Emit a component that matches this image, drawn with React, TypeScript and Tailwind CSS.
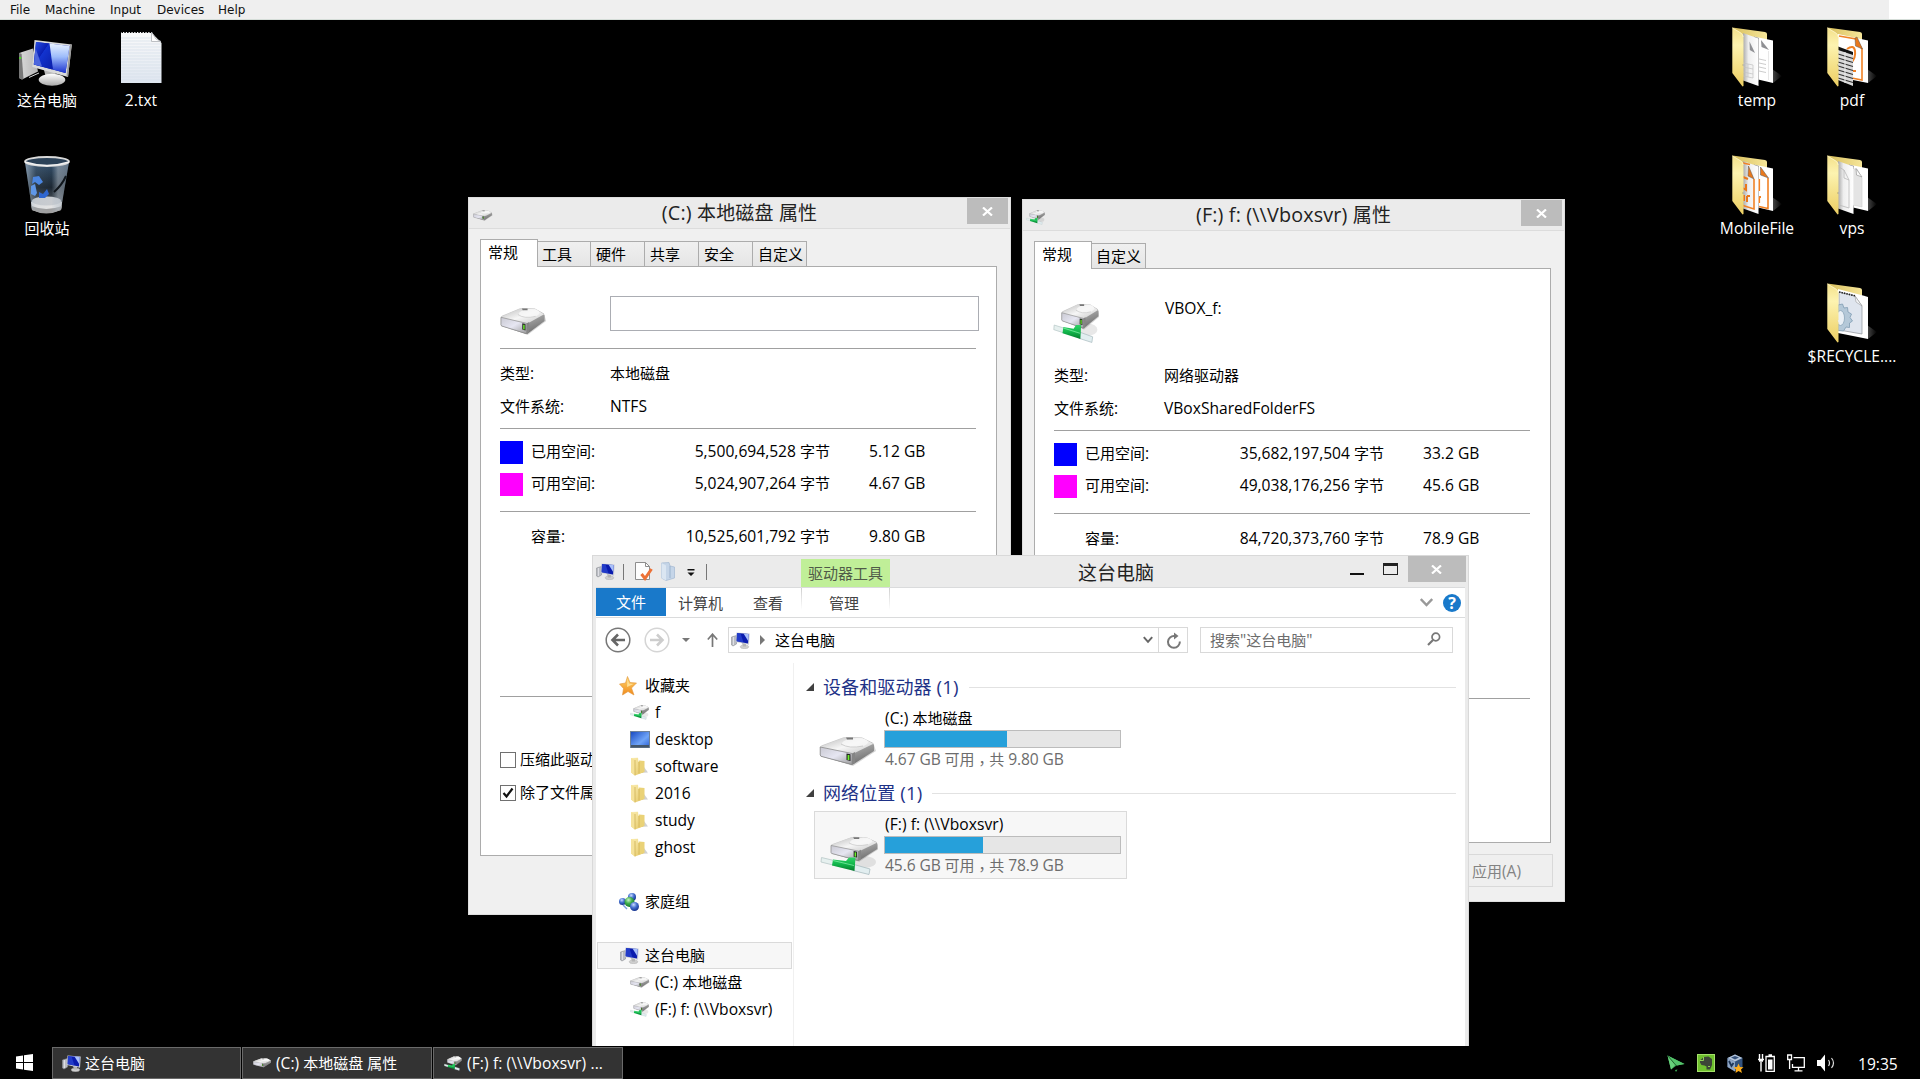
import type { ReactNode } from 'react';

function Defs() {
  return (
    <svg width="0" height="0" className="absolute">
      <defs>
        <linearGradient id="screen" x1="0" y1="0" x2="1" y2="1">
          <stop offset="0" stopColor="#2a52e8" />
          <stop offset="0.42" stopColor="#0a1fb4" />
          <stop offset="0.44" stopColor="#1233cf" />
          <stop offset="1" stopColor="#0b1fa8" />
        </linearGradient>
        <linearGradient id="shine" x1="0" y1="0" x2="0" y2="1">
          <stop offset="0" stopColor="#e8f1ff" />
          <stop offset="0.45" stopColor="#9dbcfb" />
          <stop offset="1" stopColor="#1b32cf" />
        </linearGradient>
        <linearGradient id="tower" x1="0" y1="0" x2="1" y2="0">
          <stop offset="0" stopColor="#8d8d8d" />
          <stop offset="0.15" stopColor="#d5d5d5" />
          <stop offset="1" stopColor="#b5b5b5" />
        </linearGradient>
        <linearGradient id="metal" x1="0" y1="0" x2="0" y2="1">
          <stop offset="0" stopColor="#ffffff" />
          <stop offset="1" stopColor="#a9a9a9" />
        </linearGradient>
        <linearGradient id="driveTop" x1="0" y1="0" x2="1" y2="1">
          <stop offset="0" stopColor="#b9b9b9" />
          <stop offset="0.5" stopColor="#f6f6f6" />
          <stop offset="1" stopColor="#c4c4c4" />
        </linearGradient>
        <linearGradient id="driveFront" x1="0" y1="0" x2="1" y2="1">
          <stop offset="0" stopColor="#c9c9d2" />
          <stop offset="0.5" stopColor="#e6e6f2" />
          <stop offset="1" stopColor="#9b9b9b" />
        </linearGradient>
        <linearGradient id="driveSide" x1="0" y1="0" x2="0.6" y2="1">
          <stop offset="0" stopColor="#e3e3e3" />
          <stop offset="0.6" stopColor="#a2a2a2" />
          <stop offset="1" stopColor="#737373" />
        </linearGradient>
        <linearGradient id="green" x1="0" y1="0" x2="0" y2="1">
          <stop offset="0" stopColor="#2fd266" />
          <stop offset="0.5" stopColor="#11b54b" />
          <stop offset="1" stopColor="#067c2d" />
        </linearGradient>
        <linearGradient id="folderFront" x1="0" y1="0" x2="0" y2="1">
          <stop offset="0" stopColor="#f3e08a" />
          <stop offset="0.3" stopColor="#fdf3b0" />
          <stop offset="1" stopColor="#ecce62" />
        </linearGradient>
        <linearGradient id="folderBack" x1="0" y1="0" x2="1" y2="0">
          <stop offset="0" stopColor="#d8bf5c" />
          <stop offset="1" stopColor="#f6e69a" />
        </linearGradient>
        <linearGradient id="fold" x1="0" y1="0" x2="1" y2="0">
          <stop offset="0" stopColor="#a8a8a8" />
          <stop offset="0.35" stopColor="#eeeeee" />
          <stop offset="1" stopColor="#ffffff" />
        </linearGradient>
        <linearGradient id="shade" x1="0" y1="0" x2="1" y2="0">
          <stop offset="0" stopColor="#4a4a4a" />
          <stop offset="1" stopColor="#000000" />
        </linearGradient>
        <linearGradient id="note" x1="0" y1="0" x2="0" y2="1">
          <stop offset="0" stopColor="#fafafa" />
          <stop offset="1" stopColor="#dfe6f0" />
        </linearGradient>
        <linearGradient id="bin" x1="0" y1="0" x2="0" y2="1">
          <stop offset="0" stopColor="#35516d" />
          <stop offset="0.5" stopColor="#1c2732" />
          <stop offset="1" stopColor="#6f7479" />
        </linearGradient>
        <linearGradient id="binSide" x1="0" y1="0" x2="1" y2="0">
          <stop offset="0" stopColor="#9fb2c4" stopOpacity="0.75" />
          <stop offset="0.25" stopColor="#9fb2c4" stopOpacity="0.1" />
          <stop offset="0.6" stopColor="#9fb2c4" stopOpacity="0" />
          <stop offset="0.75" stopColor="#b8c2cc" stopOpacity="0.5" />
          <stop offset="1" stopColor="#8c98a4" stopOpacity="0.55" />
        </linearGradient>
        <linearGradient id="star" x1="0" y1="0" x2="0" y2="1">
          <stop offset="0" stopColor="#ffd66b" />
          <stop offset="1" stopColor="#f08a1c" />
        </linearGradient>
        <linearGradient id="desk" x1="0" y1="0" x2="1" y2="1">
          <stop offset="0" stopColor="#1546c0" />
          <stop offset="0.6" stopColor="#6fa4f7" />
          <stop offset="1" stopColor="#2a5fd4" />
        </linearGradient>
        <linearGradient id="smallFolder" x1="0" y1="0" x2="1" y2="1">
          <stop offset="0" stopColor="#fbeeb4" />
          <stop offset="1" stopColor="#e4c662" />
        </linearGradient>
        <radialGradient id="ballBlue" cx="0.4" cy="0.3" r="0.7">
          <stop offset="0" stopColor="#c9dcff" />
          <stop offset="0.5" stopColor="#4470cf" />
          <stop offset="1" stopColor="#16338f" />
        </radialGradient>
        <radialGradient id="ballGreen" cx="0.4" cy="0.3" r="0.7">
          <stop offset="0" stopColor="#c8f5c4" />
          <stop offset="0.5" stopColor="#3fae4c" />
          <stop offset="1" stopColor="#137a2b" />
        </radialGradient>
      </defs>
    </svg>
  );
}

function PcIcon({ className }: { className: string }) {
  return (
    <svg viewBox="0 0 54 46" className={className} preserveAspectRatio="none">
      <path d="M1 13 15 8.5 20 31.5 4 39.5 1 38Z" fill="url(#tower)" />
      <path d="M1 13 3.6 14 5.5 38.8 4 39.5 1 38Z" fill="#777" />
      <rect x="1.2" y="17" width="2" height="2" fill="#4fd32c" />
      <path d="M11 37.500 21 33" stroke="#ddd" strokeWidth="1" />
      <path d="M26 30H38L37 38H28Z" fill="#b9b9b9" />
      <ellipse cx="34" cy="39.800" rx="13.300" ry="6" fill="url(#metal)" />
      <path d="M16.500 0 53.800 4.600 50 37 14.300 27Z" fill="#d9dadb" />
      <path d="M53.800 4.600 50 37 48.500 36.500 52 4.500Z" fill="#9a9a9a" />
      <path d="M18 2 51.500 6 47.500 33 15.800 24.500Z" fill="#0a1cb0" />
      <path d="M18 2 31.500 3.600 34.500 29.500 15.800 24.500Z" fill="url(#screen)" />
      <path d="M31.500 3.600 51.500 6 47.500 33 35 29.600Z" fill="url(#shine)" />
      <path d="M17.500 8 24 26.500 15.800 24.500Z" fill="#4c66dd" />
    </svg>
  );
}

/* At small sizes the tower stands out more and the screen is almost solid blue. */
function PcSmall() {
  return (
    <svg viewBox="0 0 19 17" className="h-[17px] w-[19px]">
      <path d="M0.500 5 5.500 3.500V12L2 14 0.500 13Z" fill="#b9bcc2" stroke="#8d9096" strokeWidth="0.600" />
      <path d="M2.500 5V13" stroke="#e9e9ee" strokeWidth="0.800" />
      <ellipse cx="13.500" cy="14.800" rx="4.300" ry="1.900" fill="#cfcfcf" stroke="#a5a5a5" strokeWidth="0.400" />
      <path d="M11 11H15V14.500H12Z" fill="#b5b5b5" />
      <path d="M5.500 0.400 18.700 1.500 18 12.800 4.800 10Z" fill="#cdd0d8" />
      <path d="M6 1 17.700 2 17 11.500 5.600 9.200Z" fill="#0b1cae" />
      <path d="M6 1 9.500 1.300 12.500 10.600 5.600 9.200Z" fill="#3250d8" opacity="0.600" />
      <path d="M12.500 1.500 17.700 2 17.200 9Z" fill="#a9c0fa" />
    </svg>
  );
}

function DriveShapes() {
  return (
    <g>
      <path d="M3 20 34 30 57 15 55 9Z" fill="#000" opacity="0.16" />
      <path d="M1 11.500Q1 10 3 9.200L24 1.600Q26 1 28 1L43 1.600 54 7 55 9V15L34 28.500 32.500 28.800 2 20.500 1 19Z" fill="url(#driveSide)" />
      <path d="M1.500 10.500 25 1.500 43 1.800 54.500 7.800 33.500 18 2 12Z" fill="url(#driveTop)" />
      <ellipse cx="36" cy="6.800" rx="13" ry="4.600" fill="#f8f8f8" opacity="0.8" transform="rotate(-4 36 6.800)" />
      <path d="M22 8Q30 13 44 10" stroke="#bdbdbd" fill="none" strokeWidth="0.700" />
      <path d="M27 1.500H34V3.500H28Z" fill="#777" />
      <path d="M1.200 11 33 17.500V28.500L2 20.300 1.200 19Z" fill="url(#driveFront)" stroke="#8c8c8c" strokeWidth="0.800" />
      <path d="M33 17.500 36 16V27L33 28.600Z" fill="#858585" />
      <path d="M27.500 17.500 31.500 18.200V25L27.500 24Z" fill="#222" />
      <rect x="28.600" y="19" width="1.800" height="5" fill="#6cf02a" />
    </g>
  );
}

function DriveIcon({ className }: { className: string }) {
  return (
    <svg viewBox="0 0 58 31" className={className} preserveAspectRatio="none">
      <DriveShapes />
    </svg>
  );
}

function NetDriveIcon({ className }: { className: string }) {
  return (
    <svg viewBox="0 0 58 40" className={className} preserveAspectRatio="none">
      <ellipse cx="44" cy="26" rx="12" ry="6" fill="#000" opacity="0.09" />
      <path d="M1.500 21.500 14 24.500 13 29 1 26Z" fill="#e6f0ef" stroke="#b7c8c8" strokeWidth="0.800" />
      <path d="M34 28.500 50 33 49 38.500 33 34.500Z" fill="#e2eef0" stroke="#a9bcc0" strokeWidth="0.800" />
      <g transform="translate(10 0) scale(0.86)">
        <DriveShapes />
      </g>
      <path d="M13 23.500 26 25 29 21.500H35.500L35 28 34.500 35 12 29.500Z" fill="url(#green)" />
      <path d="M13 24.500 34 29.500" stroke="#8bf3ae" strokeWidth="1" opacity="0.700" />
    </svg>
  );
}

function FolderSmall() {
  return (
    <svg viewBox="0 0 19 19" className="h-[19px] w-[19px]">
      <path d="M9 16 18 15.500 14 10Z" fill="#000" opacity="0.18" />
      <path d="M1 1 8 0.800 8.500 5 13 4.500V15.500L5 18.500 1 15.500Z" fill="url(#smallFolder)" />
      <path d="M1 1 5 2.800V18.500L1 15.500Z" fill="#f5e29a" />
      <path d="M8.500 5 9 3.500 14.500 4V15L9.500 16.500Z" fill="#ead277" />
      <path d="M5 3V18.300" stroke="#c9a94a" strokeWidth="0.700" />
      <path d="M9 5V16.500" stroke="#c9a94a" strokeWidth="0.600" />
    </svg>
  );
}

type FolderKind = 'lined' | 'pdf' | 'mobile' | 'blank' | 'gear';

function BigFolder({ kind }: { kind: FolderKind }) {
  return (
    <svg viewBox="0 0 50 60" className="mt-[4px] h-[60px] w-[50px]">
      <path d="M40 42 50 49 41 56Z" fill="url(#shade)" />
      <path d="M0.300 0.500 33 5Q35 5.300 35 7V20L10 12Z" fill="url(#folderBack)" />
      {kind === 'pdf' && (
        <g>
          <path d="M11 7 41 13.500V56L11 50Z" fill="#fff" />
          <path d="M12 9 29 12 35 22V53L12 48.500" fill="none" stroke="#f08226" strokeWidth="1.600" />
          <path d="M20 22Q27 17 28 24T24 36M25 44H29" fill="none" stroke="#f08226" strokeWidth="2" />
          <path d="M28 11 30 10 35.500 22 28.500 19Z" fill="#e8781c" stroke="#555" strokeWidth="0.500" />
          <path d="M11 19.500 26 25V59L11 53Z" fill="#d9d9d9" />
          <path d="M11 19.500 26 25V28L11 23Z" fill="#111" />
          <path d="M11 27 26 31.500M11 31 26 35.500M11 35 26 39.500M11 39 26 43.500M11 43 26 47.500M11 47 26 51.500M11 51 26 55.500" stroke="#333" strokeWidth="1.100" />
          <path d="M18 25V56" stroke="#eee" strokeWidth="1" />
        </g>
      )}
      {(kind === 'lined' || kind === 'blank' || kind === 'mobile') && (
        <g>
          <path d="M22 9.500 41 13.500V56L24 52Z" fill="#fff" />
          <path d="M22 9.500 27 11V54L22 50Z" fill="#555" opacity="0.700" />
          {kind === 'lined' && (
            <g>
              <path d="M29 13 37 23 29.500 20Z" fill="#8f9094" />
              <path d="M27 32 34 33.500M27 36 34 37.500M27 40 34 41.500M27 44 34 45.500" stroke="#b5b5b5" strokeWidth="0.700" />
              <path d="M36.500 24V53" stroke="#ddd" strokeWidth="0.700" />
            </g>
          )}
          {kind === 'blank' && (
            <g>
              <path d="M26 14 30 14 35 23V52L26 50Z" fill="#e4e4e4" stroke="#ccc" strokeWidth="0.600" />
              <path d="M29 13.500 35 22 29.500 20Z" fill="#fafafa" stroke="#999" strokeWidth="0.700" />
            </g>
          )}
          {kind === 'mobile' && (
            <g>
              <path d="M36 23V53.500L27 51.500" fill="none" stroke="#f08226" strokeWidth="1.600" />
              <path d="M28.500 12 36.500 23 28.500 20Z" fill="#e8781c" stroke="#555" strokeWidth="0.500" />
              <path d="M27 24V36M27 42V48M27 42H29" stroke="#f08226" strokeWidth="2.200" />
            </g>
          )}
          <path d="M11 6 26.500 11.500V59L11 53.500Z" fill="url(#fold)" />
          {kind === 'lined' && (
            <g>
              <path d="M17.500 14.500 23 26 17.800 23Z" fill="#8f9094" />
              <path d="M11 36 21 38V51L11 49ZM11 40 21 42M11 45 21 47M16 37V50" fill="none" stroke="#c2c2c2" strokeWidth="0.700" />
            </g>
          )}
          {kind === 'blank' && (
            <path d="M12 12 17 15 22 25V53L12 50M17 15V23L22 25" fill="none" stroke="#b9b9b9" strokeWidth="0.800" />
          )}
          {kind === 'mobile' && (
            <g>
              <path d="M11 8 18 9.500M22 24V54L11 50.500" fill="none" stroke="#f08226" strokeWidth="1.600" />
              <path d="M16.500 11 22 24 16 21Z" fill="#e8781c" stroke="#555" strokeWidth="0.500" />
              <path d="M11 22 16 24M14 29V35L11 33M12 40V46M15 41V47M15 41H18" fill="none" stroke="#e8781c" strokeWidth="2" />
            </g>
          )}
        </g>
      )}
      {kind === 'gear' && (
        <g>
          <path d="M11 6 36 12.500 41 14V56L11 50Z" fill="#fff" />
          <path d="M12 9 28 13 35 23V51L12 47Z" fill="#dfe5ee" stroke="#8e9298" strokeWidth="0.700" />
          <path d="M12 9 29 13" stroke="#222" strokeWidth="1.600" strokeDasharray="1.500 1" />
          <path d="M28 13 29 19 35 23Z" fill="#f6f8fb" stroke="#999" strokeWidth="0.600" />
          <path d="M11 22 15.500 21 17 25 20.500 24.500 21 29 24.500 31 23 34.500 25.500 38 22.500 40 22.500 44.500 19 44 16.500 48 11 47.500Z" fill="#b4c8d8" stroke="#7f9cb2" strokeWidth="0.800" />
          <ellipse cx="13.500" cy="35" rx="4" ry="7.500" fill="#e9eff5" stroke="#8aa5b9" strokeWidth="0.800" />
        </g>
      )}
      <path d="M0.300 0.500 8 5Q11.500 7 11.500 10V37L10.500 38 11.500 39V59L10.500 59.500 0.300 46Z" fill="url(#folderFront)" />
      <path d="M0.500 1 8 5.500Q11 7 11.200 10" fill="none" stroke="#fffbe0" strokeWidth="0.600" />
    </svg>
  );
}

function NoteIcon() {
  return (
    <svg viewBox="0 0 41 52" className="mt-[4px] ml-px h-[52px] w-[41px]">
      <path d="M0 1H30L40.500 12V52H0Z" fill="url(#note)" />
      <path d="M0 7H30M0 10H30M0 13H40M0 16H40M0 19H40M0 22H40M0 25H40M0 28H40M0 31H40M0 34H40M0 37H40M0 40H40M0 43H40M0 46H40M0 49H40" stroke="#d5dfe9" strokeWidth="0.700" />
      <path d="M0.500 1H30" stroke="#000" strokeWidth="1.800" strokeDasharray="1.500 1.300" />
      <path d="M30.500 1V10.500H40L35 8Z" fill="#fff" stroke="#b5b9bd" strokeWidth="0.900" />
    </svg>
  );
}

function BinIcon() {
  return (
    <svg viewBox="0 0 48 58" className="mt-[4px] h-[58px] w-[48px]">
      <path d="M2 6 9 53Q23 61 38 53L46 6Z" fill="url(#bin)" />
      <path d="M8 46Q23 38 39 46L38 54Q23 60 9 54Z" fill="#e3e3e3" />
      <path d="M8.500 50Q23 56 39 50L38 54Q23 61 9 54Z" fill="#9f9f9f" />
      <ellipse cx="23.500" cy="45" rx="14.500" ry="4.500" fill="#c9ccd0" />
      <path d="M2 6 9 53Q23 61 38 53L46 6Z" fill="url(#binSide)" />
      <path d="M31 36Q39 29 43 20" stroke="#10161c" strokeWidth="2" fill="none" />
      <path d="M10 21 16 20 20 26 16 29 12 26 9 28Z" fill="#4b85df" />
      <path d="M8 30 12 28 14 37 12 40 8 38Z" fill="#5f97e8" />
      <path d="M16 36 20 38 24 33 26 38 22 42 16 42Z" fill="#2f66cf" />
      <ellipse cx="24" cy="5.500" rx="22" ry="4.500" fill="#2c4258" stroke="#d9d9d9" strokeWidth="1.800" />
      <path d="M2 6Q24 13 46 6" fill="none" stroke="#f2f2f2" strokeWidth="1.600" />
    </svg>
  );
}

/* Latin runs are set a little larger than the CJK text around them. */
function Txt({ children }: { children: string }) {
  const parts = children.split(/([\u3000-\u9fff]+|，)/);
  return (
    <span className="whitespace-pre">
      {parts.map((part, i) => {
        if (part === '，') return <span key={i} className="relative top-[4px] font-['Noto_Sans_CJK_TC',sans-serif]">{part}</span>;
        if (i % 2 === 1) return <span key={i}>{part}</span>;
        return <span key={i} className="text-[1.04em]">{part}</span>;
      })}
    </span>
  );
}

function CloseX() {
  return (
    <svg viewBox="0 0 11 9" className="h-[9px] w-[11px]">
      <path d="M1 0.500 10 8.500M10 0.500 1 8.500" stroke="#fff" strokeWidth="2.200" />
    </svg>
  );
}

function DesktopItem({ className, label, children }: { className: string; label: string; children: ReactNode }) {
  return (
    <div className={`absolute flex h-[96px] w-[100px] flex-col items-center ${className}`}>
      <div className="flex h-[66px] items-center justify-center">{children}</div>
      <div className="mt-[2px] text-[15px] leading-[20px] text-white">
        <Txt>{label}</Txt>
      </div>
    </div>
  );
}

type Usage = { used: string; usedGb: string; free: string; freeGb: string; total: string; totalGb: string };

function UsageRow({ color, label, bytes, gb }: { color: string; label: string; bytes: string; gb: string }) {
  return (
    <div className="flex h-8 items-center">
      <div className={`mr-2 h-[23px] w-[23px] ${color}`} />
      <div className="mb-[2px] flex w-[299px] justify-between">
        <Txt>{label}</Txt>
        <Txt>{bytes}</Txt>
      </div>
      <div className="mb-[2px] pl-[39px]">
        <Txt>{gb}</Txt>
      </div>
    </div>
  );
}

type DialogProps = {
  className: string;
  panelClass: string;
  icon: ReactNode;
  title: string;
  tabs: { label: string; width: string }[];
  header: ReactNode;
  kind: string;
  fs: string;
  usage: Usage;
  footer?: ReactNode;
  children?: ReactNode;
};

function Dialog({ className, panelClass, icon, title, tabs, header, kind, fs, usage, footer, children }: DialogProps) {
  return (
    <div className={`absolute flex w-[543px] flex-col border border-[#dedede] bg-[#f0f0f0] text-[15px] leading-[20px] text-black ${className}`}>
      <div className="flex h-[31px] shrink-0 border-b border-[#dcdcdc] bg-[#ebebeb]">
        <div className="flex w-[43px] items-center pt-[4px] pl-[4px]">{icon}</div>
        <div className="flex-1 pt-px text-center text-[19px] leading-[28px] tracking-[0.15px] text-[#222]">
          <Txt>{title}</Txt>
        </div>
        <div className="mr-[2px] flex h-[26px] w-[41px] items-center justify-center bg-[#bcbcbc]">
          <CloseX />
        </div>
      </div>
      <div className="mt-[10px] ml-[11px] flex h-[28px] shrink-0 items-end">
        <div className="relative z-10 h-[28px] w-[58px] border border-b-0 border-[#acacac] bg-white pt-[2px] pl-[7px]">常规</div>
        {tabs.map((t) => (
          <div key={t.label} className={`h-[26px] border border-l-0 border-[#acacac] bg-linear-to-b from-[#f0f0f0] to-[#e5e5e5] pt-[2px] pl-[5px] first-of-type:pl-0 nth-2:pl-[4px] ${t.width}`}>
            {t.label}
          </div>
        ))}
      </div>
      <div className={`-mt-px ml-[11px] w-[517px] shrink-0 border border-[#acacac] bg-white pl-[19px] ${panelClass}`}>
        <div className="w-[476px]">
          {header}
          <div className="h-[80px] border-b border-[#a0a0a0] pt-[7px]">
            <div className="flex h-[33px] items-center">
              <div className="w-[110px]"><Txt>类型:</Txt></div>
              <Txt>{kind}</Txt>
            </div>
            <div className="flex h-[33px] items-center">
              <div className="w-[110px]"><Txt>文件系统:</Txt></div>
              <Txt>{fs}</Txt>
            </div>
          </div>
          <div className="h-[83px] border-b border-[#a0a0a0] pt-[7px]">
            <UsageRow color="bg-[#0000ff]" label="已用空间:" bytes={usage.used} gb={usage.usedGb} />
            <UsageRow color="bg-[#ff00ff]" label="可用空间:" bytes={usage.free} gb={usage.freeGb} />
          </div>
          <div className="h-[185px] border-b border-[#a0a0a0] pt-[9px]">
            <UsageRow color="bg-white" label="容量:" bytes={usage.total} gb={usage.totalGb} />
          </div>
          {children}
        </div>
      </div>
      {footer}
    </div>
  );
}

function CheckRow({ label, checked }: { label: string; checked: boolean }) {
  return (
    <div className="flex h-[33px] items-center">
      <div className="mr-[4px] flex h-4 w-4 items-center justify-center border border-[#707070] bg-white">
        {checked && (
          <svg viewBox="0 0 12 12" className="h-3 w-3">
            <path d="M1.500 6 4.500 9.500 10.500 1.500" fill="none" stroke="#111" strokeWidth="2.200" />
          </svg>
        )}
      </div>
      <span className="mb-px">{label}</span>
    </div>
  );
}

function NavRow({ icon, label, child, selected }: { icon?: ReactNode; label?: string; child?: boolean; selected?: boolean }) {
  return (
    <div
      className={`ml-px flex h-[27px] w-[195px] items-center border ${selected ? 'border-[#dadada] bg-[#f7f7f7]' : 'border-transparent'} ${child ? 'pl-[32px]' : 'pl-[21px]'}`}
    >
      {icon && <div className={`flex shrink-0 justify-center ${child ? 'mr-[6px] w-[19px]' : 'mr-[6px] w-[20px]'}`}>{icon}</div>}
      {label && <div className="mb-[2px]"><Txt>{label}</Txt></div>}
    </div>
  );
}

function GroupHeading({ label }: { label: string }) {
  return (
    <div className="flex h-[28px] items-center pl-[12px]">
      <svg viewBox="0 0 8 8" className="mr-[9px] h-2 w-2">
        <path d="M8 0V8H0Z" fill="#404040" />
      </svg>
      <span className="mb-px text-[18px] leading-[26px] tracking-[0.1px] text-[#1e3287]"><Txt>{label}</Txt></span>
      <div className="mr-[9px] ml-[10px] h-px flex-1 bg-[#e2e2e2]" />
    </div>
  );
}

function DriveTile({ className, icon, name, fill, info }: { className: string; icon: ReactNode; name: string; fill: number; info: string }) {
  return (
    <div className={`ml-[20px] flex h-[68px] w-[313px] border ${className}`}>
      <div className="w-[69px] shrink-0">{icon}</div>
      <div>
        <div className="mt-[2px] h-[22px] pl-px leading-[20px] tracking-[0.05px]"><Txt>{name}</Txt></div>
        <div className="h-[18px] w-[237px] border border-[#bcbcbc] bg-[#e6e6e6]">
          <div className="h-full bg-[#26a0da]" style={{ width: fill }} />
        </div>
        <div className="mt-px pl-px tracking-[-0.1px] text-[#6d6d6d]"><Txt>{info}</Txt></div>
      </div>
    </div>
  );
}

function Explorer() {
  return (
    <div className="absolute top-[555px] left-[592px] flex h-[491px] w-[877px] flex-col border border-b-0 border-[#d9d9d9] bg-[#ebebeb] px-[3px] text-[15px] leading-[20px] text-black">
      <div className="flex h-[31px] shrink-0">
        <div className="flex w-[205px] items-center">
          <PcSmall />
          <div className="ml-[8px] h-4 w-px bg-[#777]" />
          <svg viewBox="0 0 18 19" className="ml-[11px] h-[19px] w-[18px]">
            <path d="M0.500 0.500H10.500L14.500 4.500V17.500H0.500Z" fill="#fdfdfd" stroke="#8d8d8d" />
            <path d="M10.500 0.500V4.500H14.500" fill="none" stroke="#8d8d8d" />
            <path d="M6.500 12 10 16.500 16.500 7" fill="none" stroke="#ec7136" strokeWidth="3" />
          </svg>
          <svg viewBox="0 0 14 19" className="ml-[8px] h-[19px] w-[14px]">
            <path d="M0.500 1 8 0.500 9 4 13.500 5V16L5 18.500 0.500 16Z" fill="#c5d5e8" stroke="#a9bdd4" strokeWidth="0.800" />
            <path d="M0.500 1 5 3.500V18.500L0.500 16Z" fill="#dbe6f2" />
            <path d="M9 4V16" stroke="#90a9c6" strokeWidth="0.800" />
          </svg>
          <svg viewBox="0 0 8 7" className="mt-[2px] ml-[12px] h-[7px] w-[8px]">
            <path d="M0.500 0H7.500V1.500H0.500ZM0.500 3.500H7.500L4 7Z" fill="#111" />
          </svg>
          <div className="ml-[11px] h-4 w-px bg-[#777]" />
        </div>
        <div className="mt-[3px] h-[29px] w-[89px] bg-[#c0ef98] pt-[4px] pl-[7px] text-[#4f5a48]">驱动器工具</div>
        <div className="flex-1 pt-[3px] pl-[188px] text-[19px] leading-[28px] text-[#222]">这台电脑</div>
        <div className="flex">
          <div className="mt-[17px] mr-[19px] h-[2px] w-[14px] bg-[#111]" />
          <div className="mt-[7px] mr-[10px] h-[12px] w-[15px] border border-t-[3px] border-[#222]" />
          <div className="-mr-[1px] flex h-[26px] w-[58px] items-center justify-center bg-[#bcbcbc] pr-[2px]">
            <CloseX />
          </div>
        </div>
      </div>
      <div className="flex h-[31px] shrink-0 border border-x-0 border-[#dadbdc] bg-white text-[#444]">
        <div className="h-[28px] w-[70px] bg-[#1979ca] pt-[4px] text-center text-white">文件</div>
        <div className="ml-[12px] pt-[5px]">计算机</div>
        <div className="ml-[30px] pt-[5px]">查看</div>
        <div className="ml-[18px] h-[22px] w-px bg-linear-to-b from-[#cfcfcf] to-white" />
        <div className="w-[88px] pt-[5px] pl-[27px]">管理</div>
        <div className="-ml-px h-[22px] w-px bg-linear-to-b from-[#cfcfcf] to-white" />
        <div className="flex flex-1 items-center justify-end pr-[4px]">
          <svg viewBox="0 0 13 9" className="mr-[10px] h-[9px] w-[13px]">
            <path d="M0.800 1 6.500 7 12.200 1" fill="none" stroke="#999" strokeWidth="2.400" />
          </svg>
          <div className="flex h-[18px] w-[18px] items-center justify-center rounded-full bg-[#1979ca] font-['Open_Sans',sans-serif] text-[16px] leading-[18px] font-bold text-white">?</div>
        </div>
      </div>
      <div className="flex h-[45px] shrink-0 items-center bg-white pb-px pl-[9px]">
        <svg viewBox="0 0 26 26" className="h-[26px] w-[26px]">
          <circle cx="13" cy="13" r="11.800" fill="none" stroke="#777" strokeWidth="1.500" />
          <path d="M20 13H8M13 7.500 7.500 13 13 18.500" fill="none" stroke="#666" strokeWidth="2.600" />
        </svg>
        <svg viewBox="0 0 26 26" className="ml-[13px] h-[26px] w-[26px]">
          <circle cx="13" cy="13" r="11.800" fill="none" stroke="#d5d5d5" strokeWidth="1.500" />
          <path d="M6 13H18M13 7.500 18.500 13 13 18.500" fill="none" stroke="#cdcdcd" strokeWidth="2.600" />
        </svg>
        <svg viewBox="0 0 8 4" className="ml-[12px] h-[4px] w-[8px]">
          <path d="M0 0H8L4 4Z" fill="#777" />
        </svg>
        <svg viewBox="0 0 11 14" className="ml-[17px] h-[14px] w-[11px]">
          <path d="M5.500 14V2M0.800 6.500 5.500 1.200 10.200 6.500" fill="none" stroke="#777" strokeWidth="1.700" />
        </svg>
        <div className="ml-[10px] flex h-[26px] w-[460px] items-center border border-[#d9d9d9]">
          <div className="ml-[2px]"><PcSmall /></div>
          <svg viewBox="0 0 5 10" className="ml-[10px] h-[10px] w-[5px]">
            <path d="M0 0 5 5 0 10Z" fill="#777" />
          </svg>
          <div className="mb-px ml-[10px] flex-1">这台电脑</div>
          <svg viewBox="0 0 10 8" className="mr-[5px] h-[8px] w-[10px]">
            <path d="M0.800 1.200 5 5.800 9.200 1.200" fill="none" stroke="#666" strokeWidth="2" />
          </svg>
          <div className="flex h-full w-[29px] items-center justify-center border-l border-[#d9d9d9] pl-[2px]">
            <svg viewBox="0 0 14 17" className="h-[17px] w-[14px]">
              <path d="M12.800 9.500A5.900 5.900 0 1 1 7.500 4" fill="none" stroke="#777" strokeWidth="2" />
              <path d="M7 0.500 11.500 4 7 7.500Z" fill="#777" />
            </svg>
          </div>
        </div>
        <div className="ml-[12px] flex h-[26px] w-[253px] items-center border border-[#d9d9d9] pr-[11px] pl-[9px] text-[#6d6d6d]">
          <div className="flex-1"><Txt>搜索"这台电脑"</Txt></div>
          <svg viewBox="0 0 14 14" className="mb-[2px] h-[14px] w-[14px]">
            <circle cx="8.800" cy="5" r="3.800" fill="none" stroke="#777" strokeWidth="1.700" />
            <path d="M6 8 1 13" stroke="#777" strokeWidth="2.200" />
          </svg>
        </div>
      </div>
      <div className="flex min-h-0 flex-1 bg-white">
        <div className="w-[198px] shrink-0 border-r border-[#f0f0f0] pt-[9px]">
          <NavRow
            icon={
              <svg viewBox="0 0 18 20" className="mr-[3px] h-[20px] w-[18px] shrink-0">
                <path d="M8.500 0.500 11 6.500 17.500 7 12.500 12 15 19 9 15.500 3.500 19 4.500 12.500 0.500 8 6.500 7Z" fill="url(#star)" stroke="#e0963a" strokeWidth="0.600" />
                <path d="M8.500 2.500 10 7.500 14.500 8 8 11Z" fill="#ffe9a6" opacity="0.800" />
              </svg>
            }
            label="收藏夹"
          />
          <NavRow child icon={<NetDriveIcon className="h-[15px] w-[19px]" />} label="f" />
          <NavRow
            child
            icon={
              <svg viewBox="0 0 20 17" className="h-[17px] w-[20px] shrink-0">
                <rect x="0.500" y="0.500" width="19" height="16" fill="url(#desk)" stroke="#6f8196" />
                <rect x="1" y="14" width="18" height="2.500" fill="#43566b" />
              </svg>
            }
            label="desktop"
          />
          <NavRow child icon={<FolderSmall />} label="software" />
          <NavRow child icon={<FolderSmall />} label="2016" />
          <NavRow child icon={<FolderSmall />} label="study" />
          <NavRow child icon={<FolderSmall />} label="ghost" />
          <NavRow />
          <NavRow
            icon={
              <svg viewBox="0 0 20 18" className="mr-px h-[18px] w-[20px] shrink-0">
                <circle cx="13" cy="4" r="4" fill="url(#ballBlue)" />
                <circle cx="3.500" cy="8.500" r="3.500" fill="url(#ballBlue)" />
                <path d="M4 12 8 16" stroke="#7aa0dd" strokeWidth="1.500" />
                <circle cx="10.500" cy="9" r="5" fill="url(#ballGreen)" />
                <circle cx="15.500" cy="13.500" r="4.500" fill="url(#ballBlue)" />
              </svg>
            }
            label="家庭组"
          />
          <NavRow />
          <NavRow selected icon={<PcSmall />} label="这台电脑" />
          <NavRow child icon={<DriveIcon className="h-[11px] w-[20px] shrink-0" />} label="(C:) 本地磁盘" />
          <NavRow child icon={<NetDriveIcon className="h-[15px] w-[19px]" />} label="(F:) f: (\\Vboxsvr)" />
        </div>
        <div className="flex-1 pt-[10px]">
          <GroupHeading label="设备和驱动器 (1)" />
          <div className="mt-[4px]">
            <DriveTile
              className="border-transparent"
              icon={<DriveIcon className="mt-[30px] ml-[4px] h-[31px] w-[58px]" />}
              name="(C:) 本地磁盘"
              fill={122}
              info="4.67 GB 可用，共 9.80 GB"
            />
          </div>
          <div className="mt-[6px]">
            <GroupHeading label="网络位置 (1)" />
          </div>
          <div className="mt-[4px]">
            <DriveTile
              className="border-[#dadada] bg-[#f7f7f7]"
              icon={<NetDriveIcon className="mt-[24px] ml-[5px] h-[40px] w-[58px]" />}
              name="(F:) f: (\\Vboxsvr)"
              fill={98}
              info="45.6 GB 可用，共 78.9 GB"
            />
          </div>
        </div>
      </div>
    </div>
  );
}

function TaskButton({ className, icon, label }: { className: string; icon: ReactNode; label: string }) {
  return (
    <div className={`flex h-[32px] items-center border border-[#6a6a6a] bg-[#333333] text-[15px] text-white ${className}`}>
      <div className="mr-[4px] flex w-[20px] justify-center">{icon}</div>
      <Txt>{label}</Txt>
    </div>
  );
}

function Taskbar() {
  return (
    <div className="absolute bottom-0 left-0 flex h-[33px] w-full items-end bg-black leading-[20px]">
      <div className="flex h-[33px] w-[52px] items-center pl-4">
        <svg viewBox="0 0 17 17" className="h-[17px] w-[17px]">
          <path d="M0 2.400 7 1.400V8H0ZM8 1.200 17 0V8H8ZM0 9H7V15.600L0 14.600ZM8 9H17V17L8 15.800Z" fill="#fff" />
        </svg>
      </div>
      <div className="flex gap-px">
        <TaskButton className="w-[189px] pl-[8px]" icon={<PcSmall />} label="这台电脑" />
        <TaskButton className="w-[190px] pl-[9px]" icon={<DriveIcon className="h-[10px] w-[19px]" />} label="(C:) 本地磁盘 属性" />
        <TaskButton className="w-[190px] pl-[9px] tracking-[0.1px]" icon={<NetDriveIcon className="h-[15px] w-[18px]" />} label="(F:) f: (\\Vboxsvr) ..." />
      </div>
      <div className="flex h-[32px] flex-1 items-center justify-end pr-[22px]">
        <svg viewBox="0 0 18 17" className="h-[17px] w-[18px]">
          <path d="M0.500 0.500 17.500 9 9.500 10.500 4 14.500Z" fill="#3fae56" />
          <path d="M0.500 0.500 8.500 9.500 4 14.500Z" fill="#68d17c" />
          <path d="M0.500 0.500 17.500 9 10 10.500Z" fill="#55c46c" />
          <path d="M0.500 0.500 9 10.500" stroke="#0f3d1a" strokeWidth="0.700" />
          <path d="M8 15 10.500 14.500 9 17Z" fill="#3fae56" />
        </svg>
        <svg viewBox="0 0 18 18" className="ml-[12px] h-[18px] w-[18px]">
          <rect width="18" height="18" fill="#6fc02e" />
          <rect x="0.500" y="0.500" width="17" height="17" fill="none" stroke="#a4e06a" />
          <path d="M3 6.500 6.500 3 11.500 2.500 15 5V11L13 15.500H9.500L9.500 12.500 7.500 11.500 4.500 11 3 8.500Z" fill="#3c4538" />
          <path d="M6.500 3V6.500H3M11 12.500H13" fill="none" stroke="#8fce55" strokeWidth="1" />
        </svg>
        <svg viewBox="0 0 18 19" className="ml-[11px] h-[19px] w-[18px]">
          <path d="M9 0.500 16.500 4V13L9 17.500 1.500 13V4Z" fill="#33527c" />
          <path d="M9 0.500 16.500 4 9 7.500 1.500 4Z" fill="#b6c6da" />
          <path d="M5 3.500 9 2 13 3.500 9 5.500Z" fill="#35517b" />
          <path d="M1.500 4 9 7.500V17.500L1.500 13Z" fill="#8fa6c4" />
          <path d="M3 7 5.500 12 7.500 9" fill="none" stroke="#1e3557" strokeWidth="1.800" />
          <path d="M12.500 9.500 14 13 17.500 13.200 15 15.500 16 19 12.500 17 9.500 19 10 15.500 7.500 13.200 11 13Z" fill="#ffae1c" />
        </svg>
        <svg viewBox="0 0 17 18" className="ml-[14px] h-[18px] w-[17px]">
          <path d="M1.500 0V5M4.500 0V5M0 5.500H6M1 7H5M3 8V17.500" stroke="#fff" strokeWidth="1.400" fill="none" />
          <path d="M8 2.500H16.300V17.300H8ZM10.500 1H14" fill="none" stroke="#fff" strokeWidth="1.300" />
          <rect x="10" y="5.500" width="4.500" height="10" fill="#fff" />
        </svg>
        <svg viewBox="0 0 18 18" className="ml-[12px] h-[18px] w-[18px]">
          <path d="M6.500 3.700H17.300V13.300H5.500V10M11.500 13.500V16.500M7.500 16.800H15.500" fill="none" stroke="#fff" strokeWidth="1.300" />
          <path d="M0.700 1H4.500V5.500H0.700ZM2.600 5.500V15" fill="none" stroke="#fff" strokeWidth="1.300" />
        </svg>
        <svg viewBox="0 0 18 18" className="ml-[12px] h-[18px] w-[18px]">
          <path d="M0 6H3.500L8 0.500V17.500L3.500 12H0Z" fill="#fff" />
          <path d="M11.500 6Q13.500 9 11.500 12M14.500 4Q18.500 9 14.500 14" fill="none" stroke="#ddd" strokeWidth="1.200" />
        </svg>
        <div className="mt-[2px] ml-[23px] w-[40px] text-[15px] text-white"><Txt>19:35</Txt></div>
      </div>
    </div>
  );
}

export default function App() {
  return (
    <div className="relative h-[1079px] w-[1920px] overflow-hidden bg-black font-['Open_Sans','Noto_Sans_CJK_SC',sans-serif]">
      <Defs />
      <div className="flex h-[20px] border-b border-[#d5ddd8] bg-white">
        <div className="flex w-[1889px] bg-[#efefef] pl-[10px] font-['DejaVu_Sans',sans-serif] text-[12px] leading-[20px] text-[#111]">
          <span className="w-[35px]">File</span>
          <span className="w-[65px]">Machine</span>
          <span className="w-[47px]">Input</span>
          <span className="w-[61px]">Devices</span>
          <span>Help</span>
        </div>
      </div>

      <DesktopItem className="top-[22px] left-[-3px]" label="这台电脑">
        <PcIcon className="mt-[15px] -ml-[4px] h-[46px] w-[54px]" />
      </DesktopItem>
      <DesktopItem className="top-[22px] left-[91px]" label="2.txt">
        <NoteIcon />
      </DesktopItem>
      <DesktopItem className="top-[150px] left-[-3px]" label="回收站">
        <BinIcon />
      </DesktopItem>
      <DesktopItem className="top-[22px] left-[1707px]" label="temp">
        <BigFolder kind="lined" />
      </DesktopItem>
      <DesktopItem className="top-[22px] left-[1802px]" label="pdf">
        <BigFolder kind="pdf" />
      </DesktopItem>
      <DesktopItem className="top-[150px] left-[1707px]" label="MobileFile">
        <BigFolder kind="mobile" />
      </DesktopItem>
      <DesktopItem className="top-[150px] left-[1802px]" label="vps">
        <BigFolder kind="blank" />
      </DesktopItem>
      <DesktopItem className="top-[278px] left-[1802px]" label="$RECYCLE....">
        <BigFolder kind="gear" />
      </DesktopItem>

      <Dialog
        className="top-[197px] left-[468px] h-[718px]"
        panelClass="h-[590px]"
        icon={<DriveIcon className="h-[11px] w-[20px]" />}
        title="(C:) 本地磁盘 属性"
        tabs={[
          { label: '工具', width: 'w-[53px]' },
          { label: '硬件', width: 'w-[54px]' },
          { label: '共享', width: 'w-[54px]' },
          { label: '安全', width: 'w-[54px]' },
          { label: '自定义', width: 'w-[54px]' },
        ]}
        header={
          <div className="flex h-[82px] items-start border-b border-[#a0a0a0]">
            <DriveIcon className="mt-[40px] h-[29px] w-[47px] shrink-0" />
            <div className="mt-[29px] ml-[63px] h-[35px] w-[369px] shrink-0 border border-[#abadb3] bg-white" />
          </div>
        }
        kind="本地磁盘"
        fs="NTFS"
        usage={{
          used: '5,500,694,528 字节', usedGb: '5.12 GB',
          free: '5,024,907,264 字节', freeGb: '4.67 GB',
          total: '10,525,601,792 字节', totalGb: '9.80 GB',
        }}
      >
        <div className="pt-[46px]">
          <CheckRow label="压缩此驱动器" checked={false} />
          <CheckRow label="除了文件属性" checked />
        </div>
      </Dialog>

      <Dialog
        className="top-[199px] left-[1022px] h-[703px]"
        panelClass="h-[575px]"
        icon={<NetDriveIcon className="-ml-px h-[15px] w-[19px]" />}
        title="(F:) f: (\\Vboxsvr) 属性"
        tabs={[{ label: '自定义', width: 'w-[54px]' }]}
        header={
          <div className="flex h-[82px] items-start">
            <NetDriveIcon className="mt-[34px] -ml-px h-[41px] w-[46px] shrink-0" />
            <div className="mt-[29px] ml-[66px]"><Txt>VBOX_f:</Txt></div>
          </div>
        }
        kind="网络驱动器"
        fs="VBoxSharedFolderFS"
        usage={{
          used: '35,682,197,504 字节', usedGb: '33.2 GB',
          free: '49,038,176,256 字节', freeGb: '45.6 GB',
          total: '84,720,373,760 字节', totalGb: '78.9 GB',
        }}
        footer={
          <div className="mt-[11px] mr-[11px] flex h-[33px] w-[113px] items-center justify-center self-end border border-[#d9d9d9] bg-[#efefef] text-[#838383]">
            <Txt>应用(A)</Txt>
          </div>
        }
      />

      <Explorer />
      <Taskbar />
    </div>
  );
}
